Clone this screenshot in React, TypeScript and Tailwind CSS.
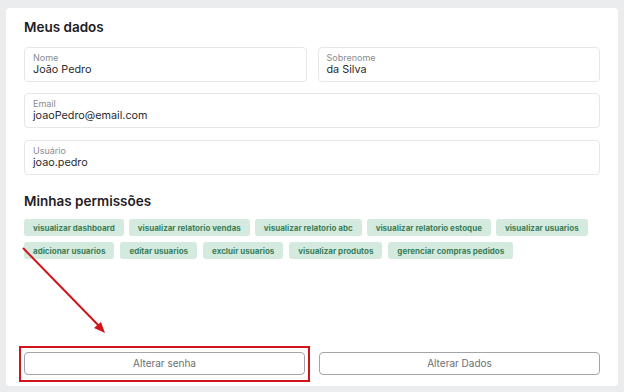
import React from "react";

const perms1 = [
  "visualizar dashboard",
  "visualizar relatorio vendas",
  "visualizar relatorio abc",
  "visualizar relatorio estoque",
  "visualizar usuarios",
];
const perms2 = [
  "adicionar usuarios",
  "editar usuarios",
  "excluir usuarios",
  "visualizar produtos",
  "gerenciar compras pedidos",
];

function Field({ label, value }: { label: string; value: string }) {
  return (
    <div className="h-[35px] rounded-[4px] border border-[#e6e7ea] bg-white px-[8px] py-[4px] flex flex-col">
      <span className="text-[9px] leading-[11px] text-[#8a8c90]">{label}</span>
      <span className="text-[10.8px] leading-[14px] text-[#2a2b2e]">{value}</span>
    </div>
  );
}

function Chip({ text }: { text: string }) {
  return (
    <span className="h-[17px] rounded-[3px] bg-[#d4eadf] px-[9px] flex items-center text-[8px] font-bold text-[#3b7f59] whitespace-nowrap">
      {text}
    </span>
  );
}

export default function App() {
  return (
    <div
      className="relative w-[624px] h-[392px] bg-[#ebecee] pt-[8px] px-[6px] overflow-hidden"
      style={{ fontFamily: "Inter, 'Noto Sans', sans-serif" }}
    >
      <div className="h-[378px] rounded-[4px] bg-white px-[18px] pt-[9px] pb-[11px] flex flex-col">
        <h2 className="text-[13.5px] leading-[20px] font-semibold text-[#1f2023]">Meus dados</h2>
        <div className="mt-[10px] grid grid-cols-2 gap-x-[11px]">
          <Field label="Nome" value="João Pedro" />
          <Field label="Sobrenome" value="da Silva" />
        </div>
        <div className="mt-[11px]">
          <Field label="Email" value="joaoPedro@email.com" />
        </div>
        <div className="mt-[12px]">
          <Field label="Usuário" value="joao.pedro" />
        </div>
        <h2 className="mt-[16px] text-[13.5px] leading-[20px] font-semibold text-[#1f2023]">Minhas permissões</h2>
        <div className="mt-[8px] flex flex-col gap-[6px]">
          <div className="flex gap-[5px]">
            {perms1.map((p) => (
              <Chip key={p} text={p} />
            ))}
          </div>
          <div className="flex gap-[6px]">
            {perms2.map((p) => (
              <Chip key={p} text={p} />
            ))}
          </div>
        </div>
        <div className="mt-auto grid grid-cols-2 gap-x-[14px]">
          <button className="h-[23px] rounded-[4px] border border-[#a4a5a8] bg-white text-[10px] text-[#6d6f73]">
            Alterar senha
          </button>
          <button className="h-[23px] rounded-[4px] border border-[#a4a5a8] bg-white text-[10px] text-[#6d6f73]">
            Alterar Dados
          </button>
        </div>
      </div>
      {/* annotation box */}
      <div className="absolute left-[19px] top-[346px] w-[291px] h-[36px] border-2 border-[#d0141a] pointer-events-none" />
      {/* annotation arrow */}
      <svg className="absolute left-0 top-0 pointer-events-none" width="624" height="392">
        <line x1="23" y1="248" x2="101" y2="328" stroke="#d0141a" strokeWidth="2" />
        <polygon points="105,333 94,328 101,322" fill="#d0141a" />
      </svg>
    </div>
  );
}
